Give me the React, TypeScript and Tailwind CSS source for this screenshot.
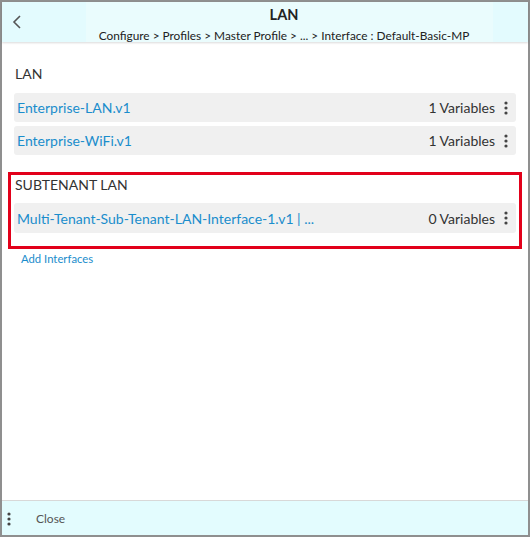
import React from "react";

type Iface = { name: string; vars: number };

const lan: Iface[] = [
  { name: "Enterprise-LAN.v1", vars: 1 },
  { name: "Enterprise-WiFi.v1", vars: 1 },
];

const Kebab = () => (
  <svg width="4" height="14" viewBox="0 0 4 14" className="text-[#444]">
    <circle cx="2" cy="2" r="1.6" fill="currentColor" />
    <circle cx="2" cy="7" r="1.6" fill="currentColor" />
    <circle cx="2" cy="12" r="1.6" fill="currentColor" />
  </svg>
);

const Row = ({ item, tall }: { item: Iface; tall?: boolean }) => (
  <div
    className={`flex items-center ${tall ? "h-[30px]" : "h-[29px]"} bg-[#f0f0f0] rounded-[3px] pl-[3px] pr-[8px]`}
  >
    <span className="text-[14px] text-[#1a8dcc] truncate">{item.name}</span>
    <span className="ml-auto text-[14px] text-[#333]">{item.vars} Variables</span>
    <span className="ml-[9px] flex items-center">
      <Kebab />
    </span>
  </div>
);

export default function App() {
  return (
    <div
      className="w-[530px] h-[537px] border-2 border-[#8f8f8f] bg-white flex flex-col"
      style={{ fontFamily: "Lato, 'Open Sans', sans-serif" }}
    >
      <div className="h-[40px] bg-[#e3fbfe] flex shadow-[0_1px_2px_rgba(0,0,0,0.15)] relative z-10">
        <div className="w-[84px] flex items-center pl-[9px]">
          <svg width="12" height="16" viewBox="0 0 12 16">
            <path d="M9 2 L3 8 L9 14" fill="none" stroke="#555" strokeWidth="1.6" />
          </svg>
        </div>
        <div className="w-[407px] bg-[#eafcfd] flex flex-col items-center pr-[11px]">
          <div className="text-[14.5px] font-bold text-[#222] leading-none mt-[6px]">LAN</div>
          <div className="text-[11.85px] text-[#222] leading-none mt-[7px]">
            Configure &gt; Profiles &gt; Master Profile &gt; ... &gt; Interface : Default-Basic-MP
          </div>
        </div>
        <div className="flex-1" />
      </div>

      <div className="flex-1 px-[12px] pt-[25px]">
        <div className="text-[14px] text-[#333] leading-none pl-[1px]">LAN</div>
        <div className="mt-[12px] flex flex-col gap-[4px]">
          {lan.map((i) => (
            <Row key={i.name} item={i} />
          ))}
        </div>

        <div className="mt-[17px] -mx-[6px] border-[3px] border-[#e2001a] px-[3px] pt-[3px] pb-[13px]">
          <div className="text-[14px] text-[#333] leading-none pl-[1px]">SUBTENANT LAN</div>
          <div className="mt-[11px]">
            <Row tall item={{ name: "Multi-Tenant-Sub-Tenant-LAN-Interface-1.v1 | ...", vars: 0 }} />
          </div>
        </div>

        <div className="mt-[2px] pl-[7px] text-[11.3px] leading-[16px] text-[#1a8dcc]">Add Interfaces</div>
      </div>

      <div className="h-[35px] border-t border-[#d8d8d8] bg-[#e3fcfe] flex items-center pt-[1px]">
        <span className="pl-[5px] flex items-center">
          <Kebab />
        </span>
        <span className="ml-[25px] text-[12px] text-[#555]">Close</span>
      </div>
    </div>
  );
}
